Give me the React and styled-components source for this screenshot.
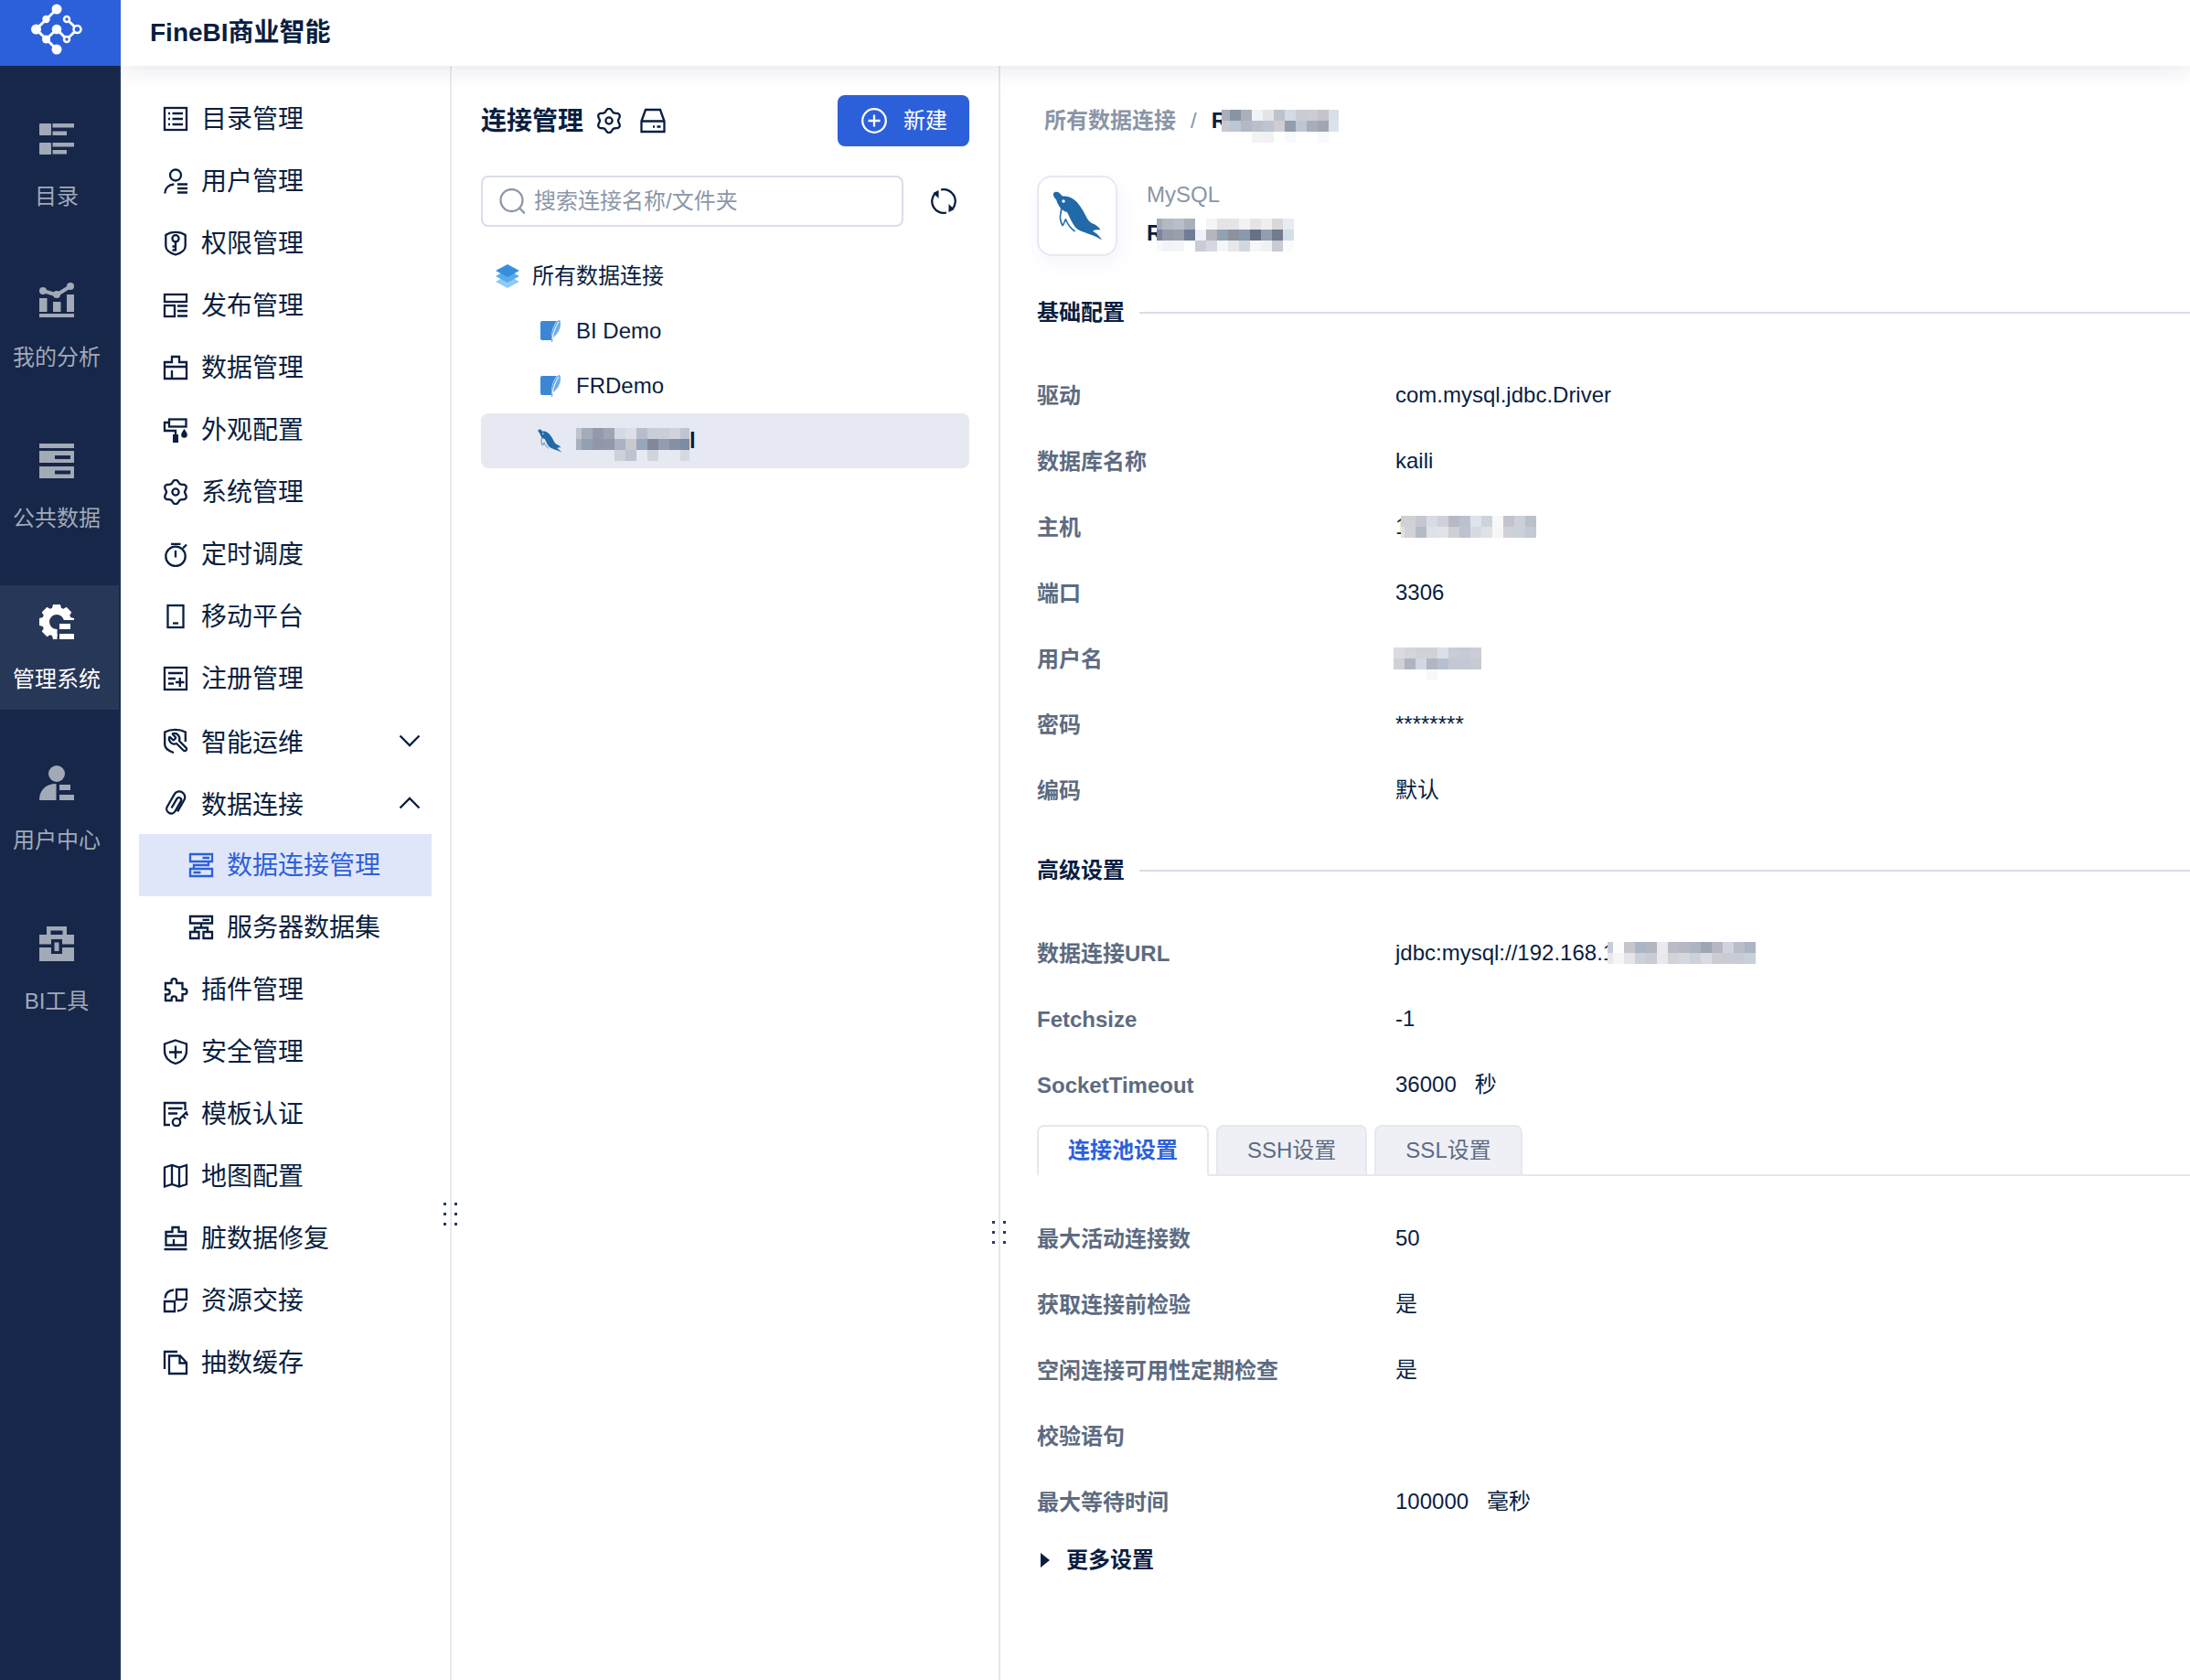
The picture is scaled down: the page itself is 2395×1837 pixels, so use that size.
import { useState } from "react";
import styled, { createGlobalStyle } from "styled-components";

const GlobalStyle = createGlobalStyle`
  * {
    box-sizing: border-box;
  }

  body {
    margin: 0;
    background: #fff;
    color: #091e40;
    font-family: "Liberation Sans", "Noto Sans CJK SC", sans-serif;
    font-size: 24px;
    line-height: 32px;
  }

  button,
  input {
    font: inherit;
    color: inherit;
  }

  a {
    color: inherit;
    text-decoration: none;
  }
`;

const Page = styled.div`
  display: flex;
  min-height: 100vh;
`;

const Rail = styled.nav`
  flex: none;
  width: 132px;
  background: #16274a;
  border-right: 2px solid #1b2c50;
`;

const LogoLink = styled.a`
  display: flex;
  align-items: center;
  justify-content: center;
  height: 72px;
  margin-right: -2px;
  padding: 0 8px 8px 0;
  background: #2c60db;
`;

const RailList = styled.div`
  display: flex;
  flex-direction: column;
  gap: 40px;
  padding-top: 40px;
`;

const RailLink = styled.a`
  display: flex;
  flex-direction: column;
  align-items: center;
  gap: 28px;
  height: 136px;
  padding: 21px 6px 0 0;
  background: ${(p) => (p.$active ? "#273758" : "transparent")};
  color: ${(p) => (p.$active ? "#fff" : "#a2a9b7")};
  white-space: nowrap;
`;

const Main = styled.div`
  flex: 1;
  min-width: 0;
  display: flex;
  flex-direction: column;
`;

const Header = styled.header`
  position: relative;
  z-index: 1;
  height: 72px;
  padding: 16px 32px;
  background: #fff;
  box-shadow: 0 4px 24px rgba(9, 30, 64, 0.1);
  clip-path: inset(0 0 -40px 0);
`;

const AppTitle = styled.h1`
  margin: 0;
  font-size: 28px;
  line-height: 40px;
`;

const Columns = styled.div`
  flex: 1;
  display: flex;
`;

const Menu = styled.nav`
  position: relative;
  flex: none;
  width: 362px;
  padding: 24px 20px;
  border-right: 2px solid #e8eaf2;
`;

const MenuItem = styled.a`
  display: flex;
  align-items: center;
  gap: 14px;
  width: 100%;
  height: 68px;
  padding: 0 10px 0 ${(p) => (p.$nested ? "54px" : "26px")};
  border: none;
  background: ${(p) => (p.$active ? "#e0e6fa" : "none")};
  color: ${(p) => (p.$active ? "#2c60db" : "inherit")};
  font-size: 28px;
  line-height: 40px;
  text-align: left;
  white-space: nowrap;
  cursor: pointer;
`;

const MenuText = styled.span`
  flex: 1;
  padding-top: ${(p) => (p.$group ? "6px" : "2px")};
`;

const GripDots = styled.svg`
  position: absolute;
  top: ${(p) => p.$top};
  right: -9px;
  transform: translateY(-50%);
`;

const Connections = styled.section`
  position: relative;
  flex: none;
  width: 600px;
  padding: 32px;
  border-right: 2px solid #e4e7f0;
`;

const PanelHead = styled.div`
  display: flex;
  align-items: center;
  height: 56px;
`;

const PanelTitle = styled.h2`
  margin: 0;
  padding-top: 2px;
  font-size: 28px;
  line-height: 40px;
`;

const IconButton = styled.button`
  display: flex;
  margin-left: ${(p) => p.$gap};
  padding: 0;
  border: none;
  background: none;
  cursor: pointer;
`;

const CreateButton = styled.button`
  display: flex;
  align-items: center;
  gap: 18px;
  height: 56px;
  margin-left: auto;
  padding: 0 24px 0 26px;
  border: none;
  border-radius: 8px;
  background: #2c60db;
  color: #fff;
  cursor: pointer;
`;

const SearchRow = styled.div`
  display: flex;
  align-items: center;
  margin: 32px 0 24px;
`;

const SearchBox = styled.label`
  display: flex;
  align-items: center;
  gap: 10px;
  width: 462px;
  height: 56px;
  padding: 0 18px;
  border: 2px solid #dadde9;
  border-radius: 8px;
  color: #8c97a8;
`;

const SearchInput = styled.input`
  flex: 1;
  min-width: 0;
  padding: 0;
  border: none;
  outline: none;
  background: none;

  &::placeholder {
    color: #8c97a8;
    opacity: 1;
  }
`;

const TreeItem = styled.a`
  display: flex;
  align-items: center;
  gap: ${(p) => (p.$child ? "16px" : "14px")};
  height: 60px;
  padding-left: ${(p) => (p.$child ? "62px" : "16px")};
  border-radius: 8px;
  background: ${(p) => (p.$active ? "#e6e9f1" : "transparent")};
`;

const Detail = styled.main`
  flex: 1;
  min-width: 0;
  padding: 44px 0 40px 40px;
`;

const Breadcrumb = styled.nav`
  display: flex;
  align-items: center;
  gap: 16px;
  padding-left: 8px;
  color: #8a95a7;
  font-weight: bold;
`;

const Slash = styled.span`
  font-weight: normal;
`;

const Masked = styled.span`
  display: flex;
  align-items: center;
  color: #091e40;
  font-weight: ${(p) => (p.$bold ? "bold" : "normal")};
`;

const MaskSvg = styled.svg`
  flex: none;
  margin-left: ${(p) => p.$pull || "0"};
  margin-bottom: ${(p) => p.$drop || "0"};
`;

const SourceCard = styled.div`
  display: flex;
  align-items: center;
  gap: 32px;
  margin-top: 44px;
  padding-bottom: 10px;
`;

const SourceLogo = styled.div`
  display: flex;
  align-items: center;
  justify-content: center;
  width: 88px;
  height: 88px;
  border: 2px solid #e6e8f3;
  border-radius: 16px;
  box-shadow: 4px 8px 20px rgba(60, 90, 200, 0.06);
`;

const SourceInfo = styled.div`
  display: flex;
  flex-direction: column;
  gap: 10px;
  padding-bottom: 4px;
`;

const SourceType = styled.span`
  color: #8a95a7;
`;

const SectionTitle = styled.h3`
  display: flex;
  align-items: center;
  gap: 16px;
  height: 32px;
  margin: 36px 0 38px;
  font-size: 24px;

  &::after {
    content: "";
    flex: 1;
    height: 2px;
    background: #dadde9;
  }
`;

const Fields = styled.dl`
  margin: 0;
`;

const Field = styled.div`
  display: grid;
  grid-template-columns: 392px 1fr;
  align-items: center;
  height: 72px;
`;

const FieldName = styled.dt`
  padding-top: 2px;
  color: #5d6b81;
  font-weight: bold;
`;

const FieldValue = styled.dd`
  display: flex;
  align-items: center;
  gap: 20px;
  margin: 0;
`;

const Tabs = styled.div`
  display: flex;
  gap: 8px;
  margin: 8px 0 32px;
  box-shadow: inset 0 -2px 0 #e6e8f1;
`;

const Tab = styled.button`
  height: 56px;
  padding: 0 32px;
  border: 2px solid #e6e8f1;
  border-bottom-color: ${(p) => (p.$active ? "#fff" : "#e6e8f1")};
  border-radius: 8px 8px 0 0;
  background: ${(p) => (p.$active ? "#fff" : "#eef0f6")};
  color: ${(p) => (p.$active ? "#2c60db" : "#5d6b81")};
  font-weight: ${(p) => (p.$active ? "bold" : "normal")};
  cursor: pointer;
`;

const MoreButton = styled.button`
  display: flex;
  align-items: center;
  gap: 18px;
  height: 56px;
  padding: 0 0 0 4px;
  border: none;
  background: none;
  font-weight: bold;
  cursor: pointer;
`;

// 28px line icons
const Icon = ({ children }) => (
  <svg
    width="28"
    height="28"
    viewBox="0 0 28 28"
    fill="none"
    stroke="currentColor"
    strokeWidth="2.3"
    aria-hidden="true"
  >
    {children}
  </svg>
);

// 38px solid icons of the left rail
const RailIcon = ({ children }) => (
  <svg width="38" height="38" viewBox="0 0 38 38" fill="currentColor" aria-hidden="true">
    {children}
  </svg>
);

const gearOutline = Array.from({ length: 90 }, (_, i) => {
  const a = (i * Math.PI) / 45;
  const r = 11.6 + 1.6 * Math.cos(6 * a);
  return `${(14 + r * Math.sin(a)).toFixed(2)},${(14 - r * Math.cos(a)).toFixed(2)}`;
}).join(" ");

const GearIcon = () => (
  <Icon>
    <polygon points={gearOutline} strokeLinejoin="round" />
    <circle cx="14" cy="14" r="3.6" />
  </Icon>
);

const menuIcons = {
  list: (
    <>
      <rect x="2" y="2" width="24" height="24" />
      <path d="M6 8h2M10.5 8H22M6 14h2M10.5 14H22M6 20h2M10.5 20H22" />
    </>
  ),
  user: (
    <>
      <circle cx="14" cy="7.5" r="6" />
      <path d="M2.3 27.5c.2-5.500 4-9.500 10-10M16 17.5h11M16 22h11M16 26.5h11" />
    </>
  ),
  key: (
    <>
      <path d="M14 1.800C10 1.800 6 3 3.300 5v12c0 5 5.700 8 10.700 9.500 5-1.500 10.700-4.500 10.700-9.500V5C22 3 18 1.800 14 1.800z" />
      <circle cx="14" cy="8.8" r="3.6" />
      <path d="M14 12.5v10M10.5 17.5H14M10.5 21.5H14" />
    </>
  ),
  publish: (
    <>
      <rect x="2" y="2" width="24" height="8" />
      <rect x="2" y="14" width="11" height="12" />
      <path d="M16 14.5h11M16 20h11M16 25.5h11" />
    </>
  ),
  data: <path d="M10 8V2h8v6h8v18H2V8zM2 13h24M10 17v9" />,
  roller: (
    <>
      <rect x="7" y="2.5" width="18.5" height="8" />
      <path d="M7 6H2v9h12v5" />
      <path
        d="M11 19h6v9h-6zM23.5 13c2 3 3.300 4.500 3.300 6.500a3.300 3.300 0 0 1-6.600 0c0-2 1.300-3.500 3.300-6.500z"
        fill="currentColor"
        stroke="none"
      />
    </>
  ),
  timer: (
    <>
      <circle cx="14" cy="16.3" r="10.7" />
      <path d="M9 2.8h10.5M22 7.5l4-4M14 10v7.5" />
    </>
  ),
  phone: (
    <>
      <rect x="5.5" y="2" width="17" height="24" />
      <path d="M11 21.5h6" />
    </>
  ),
  register: (
    <>
      <rect x="2" y="2" width="24" height="24" />
      <path d="M6 8h16M6 14h8M6 19.5h6M14 18h9.5M18.8 13v10" />
    </>
  ),
  ops: (
    <>
      <path d="M12 27C6 25 2.200 21.500 2.200 18V4.500C9 1 18.500 1 24.800 4.500V15" />
      <path
        transform="translate(28 4) scale(-.96 .96)"
        strokeLinejoin="round"
        d="M14.7 6.3a1 1 0 0 0 0 1.4l1.600 1.600a1 1 0 0 0 1.400 0l3.106-3.105c.32-.322.863-.22.983.218a6 6 0 0 1-8.259 7.057l-7.910 7.910a1 1 0 0 1-2.999-3l7.910-7.910a6 6 0 0 1 7.057-8.259c.438.120.540.662.219.984z"
      />
    </>
  ),
  clip: (
    <g transform="rotate(30 14 14)">
      <path d="M20.5 19V6.500a6.200 6.200 0 0 0-12.400 0V22a5 5 0 0 0 10 0V9.500a2.600 2.600 0 0 0-5.200 0V21M20.500 19v2" />
    </g>
  ),
  link: <path d="M2 2h24v8H2zM2 18h24v8H2zM22 10v4H6v4M15.5 6H23M5.5 22h8" />,
  dataset: (
    <path d="M2 2h24v7.500H2zM2 19h9.500v7H2zM16.5 19H26v7h-9.500zM15.5 5.800H23M14 9.500v5M7 19v-4.500h14V19" />
  ),
  plugin: (
    <path d="M3 7h6.500V5a2.800 2.800 0 0 1 5.600 0v2h6.400v6.500h2.200a2.800 2.800 0 0 1 0 5.600h-2.200V26H15v-2a2.700 2.700 0 0 0-5.400 0v2H3v-6.500h2a2.700 2.700 0 0 0 0-5.500H3z" />
  ),
  safe: (
    <path d="M14 1.500l12 4V13c0 7-5 12-12 14C7 25 2 20 2 13V5.500zM14 7.500v14M7 14.500h14" />
  ),
  cert: (
    <>
      <path d="M24.5 10V2H2v24h6M6 8h15.5M6 13.5h10" />
      <circle cx="15" cy="23" r="4.2" />
      <path d="M18 20l8.500-8.500M22 16l3 3M25 13l2.500 2.500" />
    </>
  ),
  map: (
    <path d="M2 4.500L10 2l8 2.500L26 2v21l-8 2.500-8-2.500-8 2.500zM10 2v21M18 4.500v21" />
  ),
  repair: <path d="M10.5 7V2h7v5H25v14.500H3.500V7zM3.5 11.500H25M12 15v6M1.500 26h25" />,
  handover: (
    <path d="M15 2h11v11H15zM2 15h11v11H2zM2.5 11.500C3 6 6 3 12 2.500M25.500 16.500C25 22 22 25 16 25.500" />
  ),
  cache: <path d="M16 2H2v19M7 6.500h12l7 7.500v12H7zM18.500 6.500v8H26" />,
};

const railIcons = {
  catalog: (
    <>
      <rect y="2" width="13" height="13" rx="1" />
      <rect y="23" width="13" height="13" rx="1" />
      <path d="M14.5 2H38v4.500H14.500zM14.5 10.500H30V15H14.500zM14.5 23H38v4.500H14.500zM14.5 31H30v4.500H14.500z" />
    </>
  ),
  analysis: (
    <>
      <path d="M0 17h8.500v15H0zM15 21h8.500v11H15zM30 13h8v19h-8zM0 34h38v4H0z" />
      <path d="M4 9l15 4.500L34 4" fill="none" stroke="currentColor" strokeWidth="4" />
      <circle cx="4" cy="9" r="4" />
      <circle cx="19" cy="13" r="4" />
      <circle cx="34" cy="4" r="4" />
    </>
  ),
  storage: (
    <path
      fillRule="evenodd"
      d="M0 0h38v5H0zM0 8h38v13H0zM17 13v4h17v-4zM0 25h38v13H0zM17 29.500v4h17v-4z"
    />
  ),
  system: (
    <>
      <clipPath id="gear-cut">
        <path d="M0 0h38v17H19.500v21H0z" />
      </clipPath>
      <g clipPath="url(#gear-cut)">
        <circle cx="19" cy="19" r="12" fill="none" stroke="currentColor" strokeWidth="8" />
        {[0, 45, 90, 135, 180, 225, 270, 315].map((deg) => (
          <path key={deg} d="M15 0h8l1.500 6h-11z" transform={`rotate(${deg} 19 19)`} />
        ))}
      </g>
      <path d="M22 21h12v6H22zM22 32h16v6H22z" />
    </>
  ),
  user: (
    <>
      <circle cx="19" cy="9" r="9" />
      <path d="M0 38C0 27 7 20 18.500 20v18zM22 21h12v6H22zM22 32h16v6H22z" />
    </>
  ),
  tools: (
    <path
      fillRule="evenodd"
      d="M8 9V0h22v9h8v10.500H25V14H13v5.500H0V9zM12.500 4.500V9h13V4.500zM0 23h13v7h12v-7h13v15H0zM16.500 17.500h5V27h-5z"
    />
  ),
};

const Logo = () => (
  <svg width="56" height="56" viewBox="0 0 56 56" fill="#fff" aria-label="FineBI">
    <path
      d="M28 6L5.500 28 28 50M16.500 39L28 28l11 11 11.500-11L39 17"
      fill="none"
      stroke="#fff"
      strokeWidth="3"
    />
    <circle cx="28" cy="6" r="5.5" />
    <circle cx="16.5" cy="17" r="4.2" />
    <circle cx="5.5" cy="28" r="5.5" />
    <circle cx="16.5" cy="39" r="4.5" />
    <circle cx="28" cy="50" r="5.5" />
    <circle cx="28" cy="28" r="5.3" />
    <g fill="#2c60db" stroke="#fff" strokeWidth="2.5">
      <circle cx="39" cy="17" r="3" />
      <circle cx="50.5" cy="28" r="4" />
      <circle cx="39" cy="39" r="3" />
    </g>
  </svg>
);

const Dolphin = ({ size }) => (
  <svg width={size} height={size} viewBox="0 0 54 54" aria-hidden="true">
    <path
      fill="#2169a8"
      d="M1 2.500C2 .5 5 .5 7 1.500l4 4c4-.5 8 .5 11.500 3C29 13 33 20 38 30c1.500 2.500 3.500 4.500 6 5.500 4 1.500 7 4 8.500 7-3-.500-6-.300-8.500 1 4 2.500 8 6 10 10C46 48 41 48 35 45c-4-1-8-3-10-5.500-4-5-6-11-9-16.500-2-.500-4.500-1.500-6.500-4C7 16.500 5 12.500 4 9 2 7.500.5 5 1 2.500z"
    />
    <path
      d="M9 16c2.500 5-1.500 9-.500 14 .500 3 1.500 6 2.500 7.500 2-1 1.500-5 3.500-6.500 2 5 5 9.500 10 13"
      fill="none"
      stroke="#2169a8"
      strokeWidth="1.6"
    />
    <circle cx="12" cy="11" r="1.7" fill="#fff" />
  </svg>
);

const Feather = () => (
  <svg width="26" height="26" viewBox="-3 0 26 26" aria-hidden="true">
    <path d="M2 2h16c-5 6-6 13-6 21H2a2 2 0 0 1-2-2V4a2 2 0 0 1 2-2z" fill="#3c87d5" />
    <path d="M20 1c2 0 2 2 2 4 0 6-3 11-8 15l-1 5h-1C12 14 14 5 20 1z" fill="#6fade4" />
    <path d="M20 3c-4 6-6 12-7 19" fill="none" stroke="#fff" strokeWidth="1" />
  </svg>
);

const Layers = () => (
  <svg width="26" height="26" viewBox="0 0 26 26" aria-hidden="true">
    <path d="M13 12l13 7-13 7-13-7z" fill="#8ccaf8" />
    <path d="M13 6l13 7-13 7-13-7z" fill="#5aabea" />
    <path d="M13 0l13 7-13 7L0 7z" fill="#368fdc" />
  </svg>
);

// Mosaic that hides a private value; every cell is 12px, the first one may be cut
const Mask = ({ rows, lead = 12, width, pull, drop }) => (
  <MaskSvg
    width={width}
    height={rows.length * 12}
    $pull={pull}
    $drop={drop}
    shapeRendering="crispEdges"
    aria-hidden="true"
  >
    {rows.map((row, y) =>
      row.split(" ").map((c, x) =>
        c === "-" ? null : (
          <rect
            key={`${x}-${y}`}
            x={x === 0 ? 0 : lead + (x - 1) * 12}
            y={y * 12}
            width={x === 0 ? lead : 12}
            height="12"
            fill={`#${c}`}
          />
        )
      )
    )}
  </MaskSvg>
);

const masks = {
  tree: [
    "c1c4cf a3acba 959aab 9fa5b3 d3dae6 dcdfe7 b8bdc9 c8cdd8 caced6 d0d3da bfc5d0",
    "a9afbd 93a0b2 9296a6 9299ab a8b2c3 c8c8cf 98a6bb 828899 949cae 8790a2 7b8ba4",
    "- - - - cdd1db bdc3d0 - d0d4dc - - d5d9e1",
  ],
  crumb: [
    "a9aebc 8893a4 a9afbb f0f4f8 e5e5e9 bdc2cc d3dae3 c8ccd5 ccccd4 c5c4cc d8dfe8",
    "c8c8d0 bdc6d3 b4b8c2 b9c0ca bcc5d1 cfccd2 939dae bfc6d3 a7aebb a1a5b2 dae2eb",
    "- - - f3f3f5 f1f1f3 - f8f9fc - - f8f9fc -",
  ],
  name: [
    "a3abb8 b3b8c3 b9bfca a9afbb - f3f4f6 e4e4e8 e5e5e9 f1f2f5 e4e4e8 eeeeef d7d7dc e7ecf4",
    "7a859a 949cab 9b9eab 6f7e96 edf2f7 b6b4be 92a2b2 8e929d 8b99ad 697185 939daf 737b8d d5dfe9",
    "f7f8fa f2f3f6 f4f5f8 - c9ccd4 d3d8e1 f5f6f8 e7e7ea d1d8e0 f6f6f8 f1f1f3 c9cbd4 fafbfd",
  ],
  host: [
    "cfd1d7 d0d1d6 c3c7d0 d8dbe4 cdd1da b7bac4 bbc2ce dfe3eb ced3db f8f8f9 c1c4cc ccd1d9 b9c1cc",
    "dfe0e4 d2d3d7 b5bbc5 dde1e9 e0e3e7 cfcfd3 bcc3ce d6dae3 dfe1e7 f6f6f7 d0d1d6 cad1d9 c5c9d3",
  ],
  user: [
    "dadbe0 d3d6dc d0d2d7 d1d2d8 dae0e7 c8ccd6 c5cad3 cbced8",
    "d0d1d7 afb5bf d2d7e1 b3b6c0 b7c0ce c5c8d2 c3c9d2 c7cad4",
    "- - - f8f8f9 - - - -",
  ],
  url: [
    "c8cbd3 fcfcfd c5c6cd abb5c3 b0b7c2 ebebee b9bcc7 b6b7c2 abb4c3 9fa4b2 b5b7c3 d0d2dc b9bdc9 abb4c3",
    "e6e8ed f5f5f7 e4e5e9 ccd0d9 c8cbd4 e9e9ec d2d2d8 d5d9df cdd1d9 dadbe0 ccccd3 c9cbd3 c8cbd4 c8d0da",
  ],
};

const railItems = [
  ["catalog", "目录"],
  ["analysis", "我的分析"],
  ["storage", "公共数据"],
  ["system", "管理系统"],
  ["user", "用户中心"],
  ["tools", "BI工具"],
];

const menuTop = [
  ["list", "目录管理"],
  ["user", "用户管理"],
  ["key", "权限管理"],
  ["publish", "发布管理"],
  ["data", "数据管理"],
  ["roller", "外观配置"],
  ["gear", "系统管理"],
  ["timer", "定时调度"],
  ["phone", "移动平台"],
  ["register", "注册管理"],
];

const menuBottom = [
  ["plugin", "插件管理"],
  ["safe", "安全管理"],
  ["cert", "模板认证"],
  ["map", "地图配置"],
  ["repair", "脏数据修复"],
  ["handover", "资源交接"],
  ["cache", "抽数缓存"],
];

const basicFields = [
  ["驱动", "com.mysql.jdbc.Driver"],
  ["数据库名称", "kaili"],
  [
    "主机",
    <Masked>
      1<Mask rows={masks.host} lead={4} width={148} pull="-7px" />
    </Masked>,
  ],
  ["端口", "3306"],
  [
    "用户名",
    <Masked>
      <Mask rows={masks.user} width={96} pull="-2px" drop="-12px" />
    </Masked>,
  ],
  ["密码", "********"],
  ["编码", "默认"],
];

const advancedFields = [
  [
    "数据连接URL",
    <Masked>
      jdbc:mysql://192.168.1
      <Mask rows={masks.url} lead={6} width={162} pull="-8px" />
    </Masked>,
  ],
  ["Fetchsize", "-1"],
  ["SocketTimeout", "36000", "秒"],
];

const poolFields = [
  ["最大活动连接数", "50"],
  ["获取连接前检验", "是"],
  ["空闲连接可用性定期检查", "是"],
  ["校验语句", ""],
  ["最大等待时间", "100000", "毫秒"],
];

const MenuLink = ({ icon, text, ...rest }) => (
  <MenuItem href="#" {...rest}>
    {icon === "gear" ? <GearIcon /> : <Icon>{menuIcons[icon]}</Icon>}
    <MenuText>{text}</MenuText>
  </MenuItem>
);

const MenuGroup = ({ icon, text, open, onToggle }) => (
  <MenuItem as="button" type="button" aria-expanded={open} onClick={onToggle}>
    <Icon>{menuIcons[icon]}</Icon>
    <MenuText $group>{text}</MenuText>
    <Icon>
      <path d={open ? "M3.5 19.5L14 9l10.500 10.500" : "M3.5 8.500L14 19 24.500 8.500"} />
    </Icon>
  </MenuItem>
);

const Grip = ({ top }) => (
  <GripDots $top={top} width="16" height="26" viewBox="0 0 16 26" fill="#2a3a66" aria-hidden="true">
    <path d="M0 1h3v3H0zM12 1h3v3h-3zM0 12h3v3H0zM12 12h3v3h-3zM0 23h3v3H0zM12 23h3v3h-3z" />
  </GripDots>
);

const FieldList = ({ items }) => (
  <Fields>
    {items.map(([name, value, unit]) => (
      <Field key={name}>
        <FieldName>{name}</FieldName>
        <FieldValue>
          <span>{value}</span>
          {unit && <span>{unit}</span>}
        </FieldValue>
      </Field>
    ))}
  </Fields>
);

const App = () => {
  const [opsOpen, setOpsOpen] = useState(false);
  const [dataOpen, setDataOpen] = useState(true);
  const [tab, setTab] = useState("连接池设置");

  return (
    <Page>
      <GlobalStyle />
      <Rail>
        <LogoLink href="#">
          <Logo />
        </LogoLink>
        <RailList>
          {railItems.map(([icon, text]) => (
            <RailLink key={text} href="#" $active={icon === "system"}>
              <RailIcon>{railIcons[icon]}</RailIcon>
              <span>{text}</span>
            </RailLink>
          ))}
        </RailList>
      </Rail>
      <Main>
        <Header>
          <AppTitle>FineBI商业智能</AppTitle>
        </Header>
        <Columns>
          <Menu>
            {menuTop.map(([icon, text]) => (
              <MenuLink key={text} icon={icon} text={text} />
            ))}
            <MenuGroup
              icon="ops"
              text="智能运维"
              open={opsOpen}
              onToggle={() => setOpsOpen(!opsOpen)}
            />
            <MenuGroup
              icon="clip"
              text="数据连接"
              open={dataOpen}
              onToggle={() => setDataOpen(!dataOpen)}
            />
            {dataOpen && (
              <>
                <MenuLink icon="link" text="数据连接管理" $nested $active />
                <MenuLink icon="dataset" text="服务器数据集" $nested />
              </>
            )}
            {menuBottom.map(([icon, text]) => (
              <MenuLink key={text} icon={icon} text={text} />
            ))}
            <Grip top="calc(71% + 2px)" />
          </Menu>

          <Connections>
            <PanelHead>
              <PanelTitle>连接管理</PanelTitle>
              <IconButton type="button" aria-label="设置" $gap="14px">
                <GearIcon />
              </IconButton>
              <IconButton type="button" aria-label="驱动管理" $gap="20px">
                <Icon>
                  <path d="M1.5 14.5L6 2h16l4.500 12.500V26h-25zM1.5 14.5h25M14 20.5h2M18.5 20.5h4" />
                </Icon>
              </IconButton>
              <CreateButton type="button">
                <Icon>
                  <circle cx="14" cy="14" r="12.8" />
                  <path d="M14 7.500v13M7.5 14h13" />
                </Icon>
                新建
              </CreateButton>
            </PanelHead>
            <SearchRow>
              <SearchBox>
                <Icon>
                  <circle cx="13.5" cy="13" r="12" />
                  <path d="M22 21.500l6 6" />
                </Icon>
                <SearchInput
                  type="text"
                  aria-label="搜索连接名称/文件夹"
                  placeholder="搜索连接名称/文件夹"
                />
              </SearchBox>
              <IconButton type="button" aria-label="刷新" $gap="30px">
                <Icon>
                  <path d="M17 26.500A12.800 12.800 0 0 1 4.500 5.500M11 1.500A12.800 12.800 0 0 1 23.500 22.500" />
                  <path d="M2.5 5l6 6V2zM25.500 23l-6-6v9z" fill="currentColor" stroke="none" />
                </Icon>
              </IconButton>
            </SearchRow>
            <TreeItem href="#">
              <Layers />
              <span>所有数据连接</span>
            </TreeItem>
            <TreeItem href="#" $child>
              <Feather />
              <span>BI Demo</span>
            </TreeItem>
            <TreeItem href="#" $child>
              <Feather />
              <span>FRDemo</span>
            </TreeItem>
            <TreeItem href="#" $child $active>
              <Dolphin size={26} />
              <Masked $bold>
                <Mask rows={masks.tree} lead={6} width={124} drop="-8px" />l
              </Masked>
            </TreeItem>
            <Grip top="calc(72% + 4px)" />
          </Connections>

          <Detail>
            <Breadcrumb>
              <a href="#">所有数据连接</a>
              <Slash>/</Slash>
              <Masked $bold>
                R<Mask rows={masks.crumb} lead={9} width={128} pull="-6px" drop="-12px" />
              </Masked>
            </Breadcrumb>
            <SourceCard>
              <SourceLogo>
                <Dolphin size={54} />
              </SourceLogo>
              <SourceInfo>
                <SourceType>MySQL</SourceType>
                <Masked $bold>
                  R<Mask rows={masks.name} lead={6} width={150} pull="-6px" drop="-4px" />
                </Masked>
              </SourceInfo>
            </SourceCard>

            <SectionTitle>基础配置</SectionTitle>
            <FieldList items={basicFields} />
            <SectionTitle>高级设置</SectionTitle>
            <FieldList items={advancedFields} />

            <Tabs role="tablist">
              {["连接池设置", "SSH设置", "SSL设置"].map((name) => (
                <Tab
                  key={name}
                  type="button"
                  role="tab"
                  aria-selected={tab === name}
                  $active={tab === name}
                  onClick={() => setTab(name)}
                >
                  {name}
                </Tab>
              ))}
            </Tabs>
            <FieldList items={poolFields} />
            <MoreButton type="button">
              <svg width="10" height="16" viewBox="0 0 10 16" fill="currentColor" aria-hidden="true">
                <path d="M0 0l10 8-10 8z" />
              </svg>
              更多设置
            </MoreButton>
          </Detail>
        </Columns>
      </Main>
    </Page>
  );
};

export default App;
